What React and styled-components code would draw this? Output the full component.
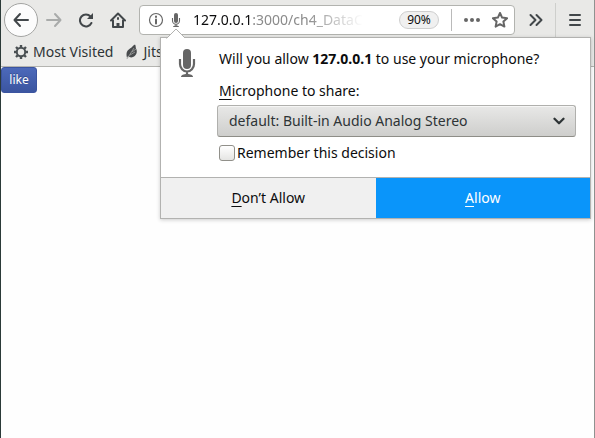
import React from "react";
import styled, { createGlobalStyle } from "styled-components";

const GlobalStyle = createGlobalStyle`
  * { box-sizing: border-box; }
  body { margin: 0; background: #fefefe; }
  body, button, input, select {
    font-family: "Noto Sans", "Open Sans", sans-serif;
    font-size: 14px;
    line-height: 20px;
    color: #0c0c0d;
  }
  button { margin: 0; padding: 0; border: 0; background: none; }
  svg { display: block; flex: none; }
`;

const Window = styled.div`
  position: relative;
  display: flex;
  flex-direction: column;
  min-height: 100vh;
  border-left: 1px solid #2b3a38;
  border-right: 1px solid #8f9290;
`;

const Chrome = styled.header`
  background: #e9e9e7;
  border-bottom: 1px solid #b4b4b0;
`;

const Toolbar = styled.nav`
  display: flex;
  align-items: center;
  height: 40px;
  padding-left: 3px;
`;

const ToolButton = styled.button`
  display: grid;
  place-items: center;
  flex: none;
  width: ${(p) => p.$width || 32}px;
  height: 34px;
  color: ${(p) => (p.$faded ? "#a9abaa" : "#42474a")};
`;

const BackButton = styled(ToolButton)`
  width: 34px;
  border: 1px solid #a3a4a2;
  border-radius: 50%;
  background: #fcfcfc;
`;

const MenuSlot = styled.div`
  display: grid;
  place-items: center;
  flex: none;
  width: 39px;
  height: 34px;
  border-left: 1px solid #cecfcc;
`;

const AddressBar = styled.div`
  display: flex;
  align-items: center;
  flex: 1;
  min-width: 0;
  height: 30px;
  margin: 0 2px 0 5px;
  padding-left: 8px;
  border: 1px solid #b2b3af;
  border-radius: 4px;
  background: #fff;
`;

const AddressIcon = styled.button`
  display: grid;
  place-items: center;
  flex: none;
  width: ${(p) => p.$width}px;
  height: 24px;
  color: #666;
`;

const Address = styled.div`
  flex: 1;
  min-width: 0;
  margin-left: 5px;
  white-space: nowrap;
  color: #8b8b8b;
  mask-image: linear-gradient(to left, transparent 36px, #000 92px);

  b { font-weight: 400; color: #0c0c0d; }
`;

const Zoom = styled.button`
  flex: none;
  width: 40px;
  height: 18px;
  border: 1px solid #cfcfcf;
  border-radius: 9px;
  background: #f0f0f0;
  font-size: 12px;
  line-height: 16px;
`;

const Divider = styled.span`
  flex: none;
  width: 1px;
  height: 22px;
  margin: 0 6px 0 12px;
  background: #bababa;
`;

const Bookmarks = styled.nav`
  display: flex;
  align-items: center;
  gap: 12px;
  height: 26px;
  padding: 0 12px 2px;
`;

const Bookmark = styled.a`
  display: flex;
  align-items: center;
  gap: 4px;
  color: #2e3436;
  text-decoration: none;
  white-space: nowrap;

  svg { color: #4a5053; }
`;

const Page = styled.main`
  flex: 1;
`;

const LikeButton = styled.button`
  display: block;
  width: 36px;
  height: 26px;
  border: 1px solid #3b54a0;
  border-radius: 3px;
  background: linear-gradient(#4c69ba, #3b55a0);
  color: #fff;
  font-size: 12px;
  line-height: 22px;
  text-shadow: 0 -1px #354c8c;
`;

const Popup = styled.section`
  position: absolute;
  top: 37px;
  left: 159px;
  right: 3px;
  border: 1px solid #b2b2b0;
  background: #fff;
  box-shadow: 0 1px 4px rgba(0, 0, 0, 0.2);
`;

const Arrow = styled.svg`
  position: absolute;
  top: -10px;
  left: 5px;
`;

const Question = styled.div`
  display: flex;
  gap: 21px;
  padding: 11px 14px 14px 17px;
  color: #666;
`;

const Details = styled.div`
  flex: 1;
  display: flex;
  flex-direction: column;
  min-width: 0;
  color: #0c0c0d;
`;

const Message = styled.p`
  margin: 0 0 12px 2px;
`;

const FieldLabel = styled.label`
  margin: 0 0 4px 2px;
`;

const Key = styled.span`
  text-decoration: underline;
  text-decoration-thickness: 1px;
  text-underline-offset: 3px;
`;

const SelectBox = styled.div`
  display: grid;
  align-items: center;
  color: #2e3436;

  > * { grid-area: 1 / 1; }
  > svg { justify-self: end; margin-right: 11px; pointer-events: none; }
`;

const Select = styled.select`
  appearance: none;
  width: 100%;
  height: 32px;
  padding: 0 32px 0 11px;
  border: 1px solid #b0b0ad;
  border-bottom-color: #8e8d87;
  border-radius: 3px;
  background: linear-gradient(#e8e8e7, #cececc);
  box-shadow: inset 0 1px #f6f6f5;
  color: #2e3436;
`;

const Remember = styled.label`
  display: flex;
  align-items: center;
  gap: 2px;
  margin: 6px 0 0 2px;
`;

const Checkbox = styled.input`
  appearance: none;
  width: 16px;
  height: 16px;
  margin: 0;
  border: 1px solid #91908a;
  border-radius: 3px;
  background: linear-gradient(#fff, #e5e5e3);

  &:checked { background: #4a90d9; }
`;

const Actions = styled.footer`
  display: grid;
  grid-template-columns: 1fr 1fr;
  border-top: 1px solid #b2b2b0;
`;

const Action = styled.button`
  height: 40px;
  background: ${(p) => (p.$primary ? "#0a95fa" : "#f0f0f0")};
  color: ${(p) => (p.$primary ? "#fff" : "#0c0c0d")};
`;

const Icon = ({ size = 16, width = 2, children }) => (
  <svg width={size} height={size} viewBox="0 0 16 16" fill="none" stroke="currentColor"
    strokeWidth={width} strokeLinecap="round" strokeLinejoin="round" aria-hidden="true">
    {children}
  </svg>
);

const Microphone = ({ width, height }) => (
  <svg width={width} height={height} viewBox="0 0 18 28" aria-hidden="true">
    <rect x="5" y="0" width="8" height="20" rx="4" fill="currentColor" />
    <path d="M2 10v5a7 7.500 0 0 0 14 0V10M9 22v4" fill="none" stroke="currentColor" strokeWidth="2.200" />
    <path d="M3 28c0-2 2.500-3 6-3s6 1 6 3z" fill="currentColor" />
  </svg>
);

const Gear = () => (
  <Icon>
    <circle cx="8" cy="8" r="4.200" />
    <path strokeLinecap="butt" strokeWidth="2.400" d="M8 1v2.500M8 12.500V15M1 8h2.500M12.500 8H15M3 3l2 2M11 11l2 2M3 13l2-2M11 5l2-2" />
  </Icon>
);

const Feather = () => (
  <svg width="14" height="16" viewBox="0 0 14 16" aria-hidden="true">
    <path d="M2 14C1 9 1.500 7 5 4.500c2.500-1.500 3-3 5-4 1 1 .5 3 1 4 2 3.500 0 7.500-3 8.500-2 1-4 0-5-1l-1.500 3.500z" fill="#484b4d" />
    <path d="M2 15L9 4M5 11l5-3M7 8l4-3" stroke="#a5a6a5" strokeWidth=".8" fill="none" />
  </svg>
);

export default function App() {
  return (
    <>
      <GlobalStyle />
      <Window>
        <Chrome>
          <Toolbar aria-label="Navigation">
            <BackButton aria-label="Back">
              <Icon><path d="M15 8H2M7 2L1.500 8 7 14" /></Icon>
            </BackButton>
            <ToolButton $faded aria-label="Forward">
              <Icon><path d="M1 8h13M9 2l5.500 6L9 14" /></Icon>
            </ToolButton>
            <ToolButton aria-label="Reload">
              <Icon>
                <path d="M12.500 4.500A6 6 0 1 0 13.400 11" />
                <path d="M15 1v6H9z" fill="currentColor" stroke="none" />
              </Icon>
            </ToolButton>
            <ToolButton aria-label="Home">
              <Icon>
                <path d="M1 8.500L8 1.500l7 7M3 8.500V15h10V8.500" />
                <path d="M8 15v-4" strokeWidth="3" strokeLinecap="butt" />
                <path d="M8 6v1" />
              </Icon>
            </ToolButton>
            <AddressBar>
              <AddressIcon $width={16} aria-label="Site information">
                <Icon width={1.2}>
                  <circle cx="8" cy="8" r="6.500" />
                  <path d="M8 7.500v4M8 4.500v.5" strokeWidth="2" />
                </Icon>
              </AddressIcon>
              <AddressIcon $width={24} aria-label="Microphone request">
                <Microphone width={10} height={14} />
              </AddressIcon>
              <Address><b>127.0.0.1</b>:3000/ch4_DataC</Address>
              <Zoom>90%</Zoom>
              <Divider />
              <AddressIcon $width={28} aria-label="Page actions">
                <Icon>
                  <g fill="currentColor" stroke="none">
                    <circle cx="2" cy="8" r="2" />
                    <circle cx="8" cy="8" r="2" />
                    <circle cx="14" cy="8" r="2" />
                  </g>
                </Icon>
              </AddressIcon>
              <AddressIcon $width={28} aria-label="Bookmark this page">
                <Icon width={2}>
                  <path d="M8 1l2.100 4.600 5 .6-3.700 3.400 1 5L8 12.200 3.600 14.600l1-5L.9 6.200l5-.6z" />
                </Icon>
              </AddressIcon>
            </AddressBar>
            <ToolButton $width={38} aria-label="More tools">
              <Icon><path d="M2.500 3l5 5-5 5M8.500 3l5 5-5 5" /></Icon>
            </ToolButton>
            <MenuSlot>
              <ToolButton aria-label="Menu">
                <Icon><path d="M3 3h10M3 8h10M3 13h10" /></Icon>
              </ToolButton>
            </MenuSlot>
          </Toolbar>
          <Bookmarks aria-label="Bookmarks">
            <Bookmark href="#visited"><Gear />Most Visited</Bookmark>
            <Bookmark href="#jitsi"><Feather />Jits</Bookmark>
          </Bookmarks>
        </Chrome>
        <Page><LikeButton>like</LikeButton></Page>
        <Popup role="dialog" aria-label="Microphone permission">
          <Arrow width="26" height="11" viewBox="0 0 26 11" aria-hidden="true">
            <path d="M0 11L10 1l10 10z" fill="#fff" />
            <path d="M0 10l1 0L10 1l9 9" fill="none" stroke="#b2b2b0" />
          </Arrow>
          <Question>
            <Microphone width={18} height={28} />
            <Details>
              <Message>Will you allow <b>127.0.0.1</b> to use your microphone?</Message>
              <FieldLabel htmlFor="microphone"><Key>M</Key>icrophone to share:</FieldLabel>
              <SelectBox>
                <Select id="microphone">
                  <option>default: Built-in Audio Analog Stereo</option>
                </Select>
                <Icon size={12} width={3}><path d="M2 5l6 6 6-6" /></Icon>
              </SelectBox>
              <Remember><Checkbox type="checkbox" />Remember this decision</Remember>
            </Details>
          </Question>
          <Actions>
            <Action><Key>D</Key>on’t Allow</Action>
            <Action $primary><Key>A</Key>llow</Action>
          </Actions>
        </Popup>
      </Window>
    </>
  );
}
